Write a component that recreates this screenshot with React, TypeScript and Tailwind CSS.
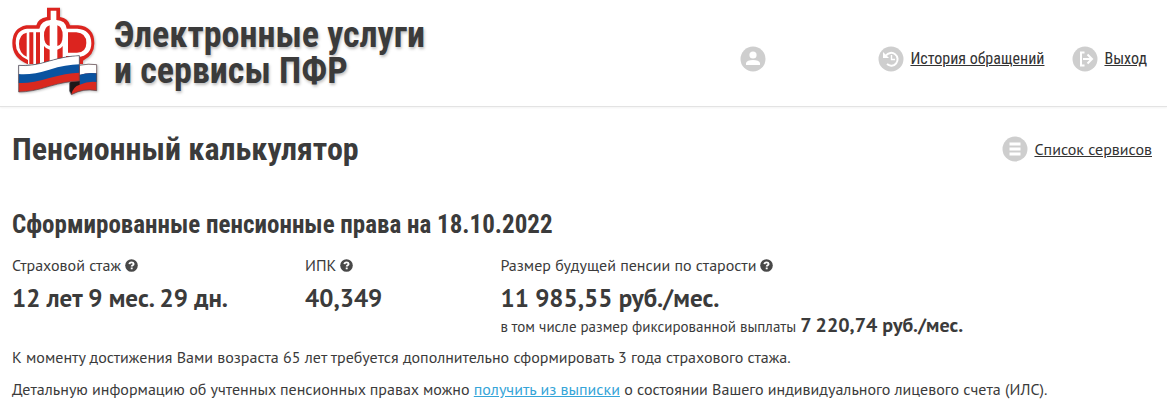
import type { ReactNode } from 'react';

const condensed =
  "font-['Roboto_Condensed','Liberation_Sans_Narrow','Roboto',sans-serif]";

const Logo = () => (
  <svg
    className="mb-1 h-[90px] w-[88px] shrink-0 drop-shadow-[1px_1px_1px_rgba(0,0,0,0.25)]"
    viewBox="36 20 264 270"
    role="img"
    aria-label="ПФР"
  >
    <path
      d="M141 25h39v28q25 4 30 25h24q49 4 49 54 0 36-34 52v10H82q-45-18-45-62 0-46 42-54h30q5-21 32-25z"
      fill="#dc241f"
    />
    <path
      d="M152 34h17v28q28 1 31 26h32q42 3 42 44 0 36-40 42h-10v20H84v-12q-37-16-37-50 0-40 34-44h37q5-24 34-26z"
      fill="#fff"
    />
    <g fill="#dc241f">
      <path d="M80 100v72q-23-10-23-38 0-29 23-34z" />
      <path d="M88 99h12v95H88zM108 99h12v95h-12z" />
      <path d="M149 78v62q-17-4-17-31t17-31zM132 140q6 9 17 11v43h-17z" />
      <path d="M172 78v62q16-4 16-31t-16-31zM188 140q-5 9-16 11v43h16z" />
      <path d="M204 99h25q30 2 30 32 0 28-28 29h-27zM198 170h11v20h-11z" />
    </g>
    <path d="M211 252l28-54q26-6 51-2v78q-40-8-76 12z" fill="#d9291f" />
    <path d="M239 198q26-6 51-2v26q-26-3-51 5z" fill="#fff" />
    <path d="M239 226q26-8 51-4v26q-26-3-51 8z" fill="#0a53a0" />
    <path d="M209 249l30-5v12q-20 6-25 29l-5-10z" fill="#1d1718" />
    <path d="M56 198q38 4 92-13 50-15 90-16v76q-40 1-90 16-54 17-92 17z" fill="#d9291f" />
    <path d="M56 198q38 4 92-13 50-15 90-16v51q-40 1-90 16-54 17-92 15z" fill="#0a53a0" />
    <path d="M56 198q38 4 92-13 50-15 90-16v26q-40 1-90 16-54 17-92 13z" fill="#fff" />
    <path
      d="M56 198q38 4 92-13 50-15 90-16v76q-40 1-90 16-54 17-92 17zM239 198q26-6 51-2v78q-40-8-76 12l-5-11v-24"
      fill="none"
      stroke="#4a4a52"
      strokeWidth="2"
    />
  </svg>
);

const RoundIcon = ({ children }: { children: ReactNode }) => (
  <svg
    className="size-[26px] shrink-0"
    viewBox="0 0 26 26"
    fill="none"
    stroke="#fff"
    strokeWidth="2"
    aria-hidden="true"
  >
    <circle cx="13" cy="13" r="12.5" fill="#cecece" stroke="none" />
    {children}
  </svg>
);

const Help = ({ label }: { label: string }) => (
  <button type="button" aria-label={label} className="shrink-0">
    <svg className="size-[13px]" viewBox="0 0 13 13" aria-hidden="true">
      <circle cx="6.5" cy="6.5" r="6.3" fill="#484848" />
      <path
        d="M4.4 5.1q.2-1.7 2.1-1.7t2.1 1.500q0 .8-1 1.400-.9.500-.9 1.200M6.700 8.600v1.600"
        fill="none"
        stroke="#fff"
        strokeWidth="1.9"
      />
    </svg>
  </button>
);

type FigureProps = {
  title: string;
  value: string;
  children?: ReactNode;
};

const Figure = ({ title, value, children }: FigureProps) => (
  <div>
    <div className="flex items-center gap-1 leading-5">
      <span>{title}</span>
      <Help label={`Подсказка: ${title}`} />
    </div>
    <p className="mt-2 text-[25px] font-bold leading-[30px]">{value}</p>
    {children}
  </div>
);

const App = () => {
  return (
    <div className="bg-white font-['PT_Sans','Noto_Sans',sans-serif] text-base text-[#3b3b3b]">
      <header className="flex h-[107px] items-center border-b border-[#e3e3e3] pl-3 pr-5 shadow-[0_1px_2px_rgba(0,0,0,0.05)]">
        <Logo />
        <p
          className={`${condensed} ml-3.5 whitespace-nowrap text-4xl font-bold leading-9 [text-shadow:1px_2px_3px_rgba(0,0,0,0.25)]`}
        >
          Электронные услуги
          <br />и сервисы ПФР
        </p>
        <nav
          className={`${condensed} ml-auto mt-3 flex items-center text-[#333]`}
        >
          <button type="button" aria-label="Профиль" className="mr-28">
            <RoundIcon>
              <circle cx="13" cy="9" r="3.6" fill="#fff" stroke="none" />
              <path d="M6 19v-2q1-3 7-3t7 3v2z" fill="#fff" stroke="none" />
            </RoundIcon>
          </button>
          <a href="#" className="flex items-center gap-1.5 underline">
            <RoundIcon>
              <path d="M8 9.5a6.4 6.4 0 1 1 1 8.600" />
              <path d="M5 6v6h6z" fill="#fff" stroke="none" />
              <path d="M13.500 9v4.500H17" strokeWidth="1.4" />
            </RoundIcon>
            История обращений
          </a>
          <a href="#" className="ml-7 flex items-center gap-1.5 underline">
            <RoundIcon>
              <path d="M12.500 6.500H9v13h3.500M11 13h8.500M15.500 8.500 20 13l-4.500 4.500" />
            </RoundIcon>
            Выход
          </a>
        </nav>
      </header>

      <main className="px-3">
        <div className="flex items-center justify-between pr-[3px] pt-6">
          <h1 className={`${condensed} text-[32px] font-bold leading-9`}>
            Пенсионный калькулятор
          </h1>
          <a
            href="#"
            className="flex items-center gap-1.5 text-[#333] underline"
          >
            <RoundIcon>
              <path
                d="M7.500 8h11M7.500 13h11M7.500 18h11"
                strokeWidth="3"
              />
            </RoundIcon>
            Список сервисов
          </a>
        </div>

        <section>
          <h2 className={`${condensed} mt-10 text-[25px] font-bold leading-9`}>
            Сформированные пенсионные права на 18.10.2022
          </h2>
          <div className="mt-3 grid grid-cols-[30fr_20fr_67fr]">
            <Figure title="Страховой стаж" value="12 лет 9 мес. 29 дн." />
            <Figure title="ИПК" value="40,349" />
            <Figure
              title="Размер будущей пенсии по старости"
              value="11 985,55 руб./мес."
            >
              <p className="text-[15px] leading-6">
                в том числе размер фиксированной выплаты{' '}
                <b className="text-xl leading-6">7 220,74 руб./мес.</b>
              </p>
            </Figure>
          </div>
          <p className="mt-1.5 leading-6">
            К моменту достижения Вами возраста 65 лет требуется дополнительно
            сформировать 3 года страхового стажа.
          </p>
          <p className="mt-2 leading-6">
            Детальную информацию об учтенных пенсионных правах можно{' '}
            <a href="#" className="text-[#36a5d8] underline">
              получить из выписки
            </a>{' '}
            о состоянии Вашего индивидуального лицевого счета (ИЛС).
          </p>
        </section>
      </main>
    </div>
  );
};

export default App;
